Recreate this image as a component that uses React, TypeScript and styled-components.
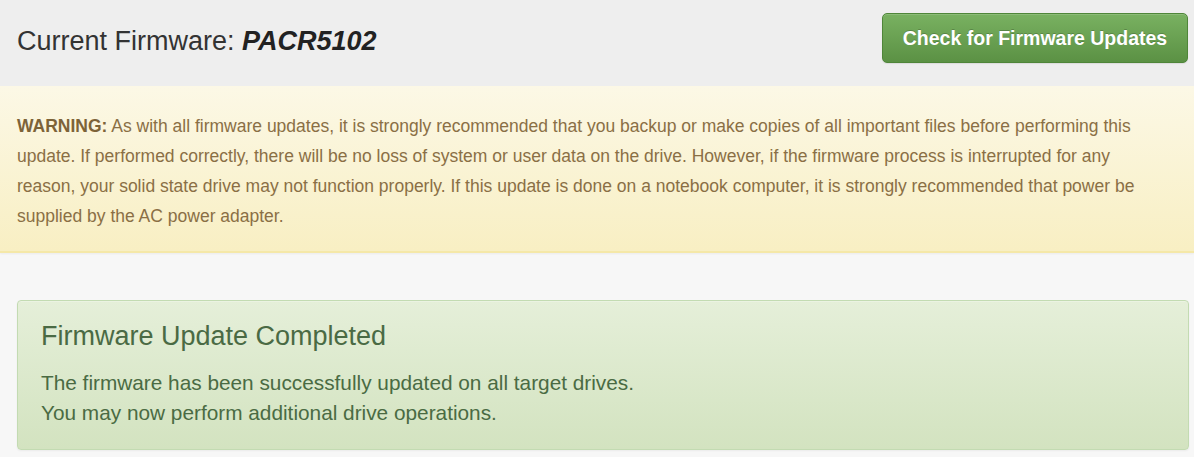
import styled, { createGlobalStyle } from 'styled-components'

const GlobalStyle = createGlobalStyle`
  html, body {
    margin: 0;
    padding: 0;
    background: #f7f7f7;
    font-family: "Liberation Sans", Arial, sans-serif;
  }
`

const Page = styled.div`
  display: flex;
  flex-direction: column;
  width: 1194px;
  min-height: 457px;
  background: #f7f7f7;
`

// header elements

const Header = styled.div`
  align-items: flex-start;
  background: #eeeeee;
  box-sizing: border-box;
  display: flex;
  height: 86px;
  justify-content: space-between;
  padding: 13px 6px 0 17px;
`

const Title = styled.h3`
  color: #333333;
  font-size: 27px;
  font-weight: normal;
  line-height: 30px;
  margin: 13px 0 0;
`

const Version = styled.em`
  color: #222222;
  font-style: italic;
  font-weight: bold;
`

const UpdateButton = styled.button`
  background-image: linear-gradient(to bottom, #79b161 0%, #5b9144 100%);
  border: 1px solid #4f8639;
  border-radius: 5px;
  box-shadow: inset 0 1px 0 rgba(255, 255, 255, 0.15), 0 1px 1px rgba(0, 0, 0, 0.08);
  color: #ffffff;
  cursor: pointer;
  font-family: inherit;
  font-size: 19.5px;
  font-weight: bold;
  height: 50px;
  padding: 0;
  text-shadow: 0 -1px 0 rgba(0, 0, 0, 0.2);
  white-space: nowrap;
  width: 306px;
`

// alerts

const Warning = styled.div`
  background-image: linear-gradient(to bottom, #fcf8e6 0%, #f8efc3 100%);
  border-bottom: 2px solid #f5e8a8;
  box-shadow: 0 1px 2px rgba(0, 0, 0, 0.05);
  color: #8a6f45;
  font-size: 17.5px;
  line-height: 30px;
  padding: 25px 17px 20px;
`

const Strong = styled.strong`
  color: #7d6338;
`

const Success = styled.div`
  background-image: linear-gradient(to bottom, #e5efd9 0%, #d3e3c0 100%);
  border: 1px solid #c3dbb2;
  border-radius: 4px;
  box-shadow: inset 0 1px 0 rgba(255, 255, 255, 0.25), 0 1px 2px rgba(0, 0, 0, 0.05);
  color: #4a6b43;
  margin: 47px 5px 7px 17px;
  padding: 21px 23px 21px;
`

const SuccessTitle = styled.h4`
  color: #4a6a44;
  font-size: 27px;
  font-weight: normal;
  line-height: 29.7px;
  margin: 0 0 16px;
`

const SuccessText = styled.p`
  font-size: 20.8px;
  line-height: 30px;
  margin: 0;
`

export default function App() {
  return (
    <>
      <GlobalStyle />
      <Page>
        <Header>
          <Title>
            Current Firmware: <Version>PACR5102</Version>
          </Title>
          <UpdateButton>Check for Firmware Updates</UpdateButton>
        </Header>
        <Warning>
          <Strong>WARNING:</Strong> As with all firmware updates, it is strongly recommended that you backup or
          make copies of all important files before performing this
          <br />
          update. If performed correctly, there will be no loss of system or user data on the drive. However, if
          the firmware process is interrupted for any
          <br />
          reason, your solid state drive may not function properly. If this update is done on a notebook computer,
          it is strongly recommended that power be
          <br />
          supplied by the AC power adapter.
        </Warning>
        <Success>
          <SuccessTitle>Firmware Update Completed</SuccessTitle>
          <SuccessText>
            The firmware has been successfully updated on all target drives.
            <br />
            You may now perform additional drive operations.
          </SuccessText>
        </Success>
      </Page>
    </>
  )
}
